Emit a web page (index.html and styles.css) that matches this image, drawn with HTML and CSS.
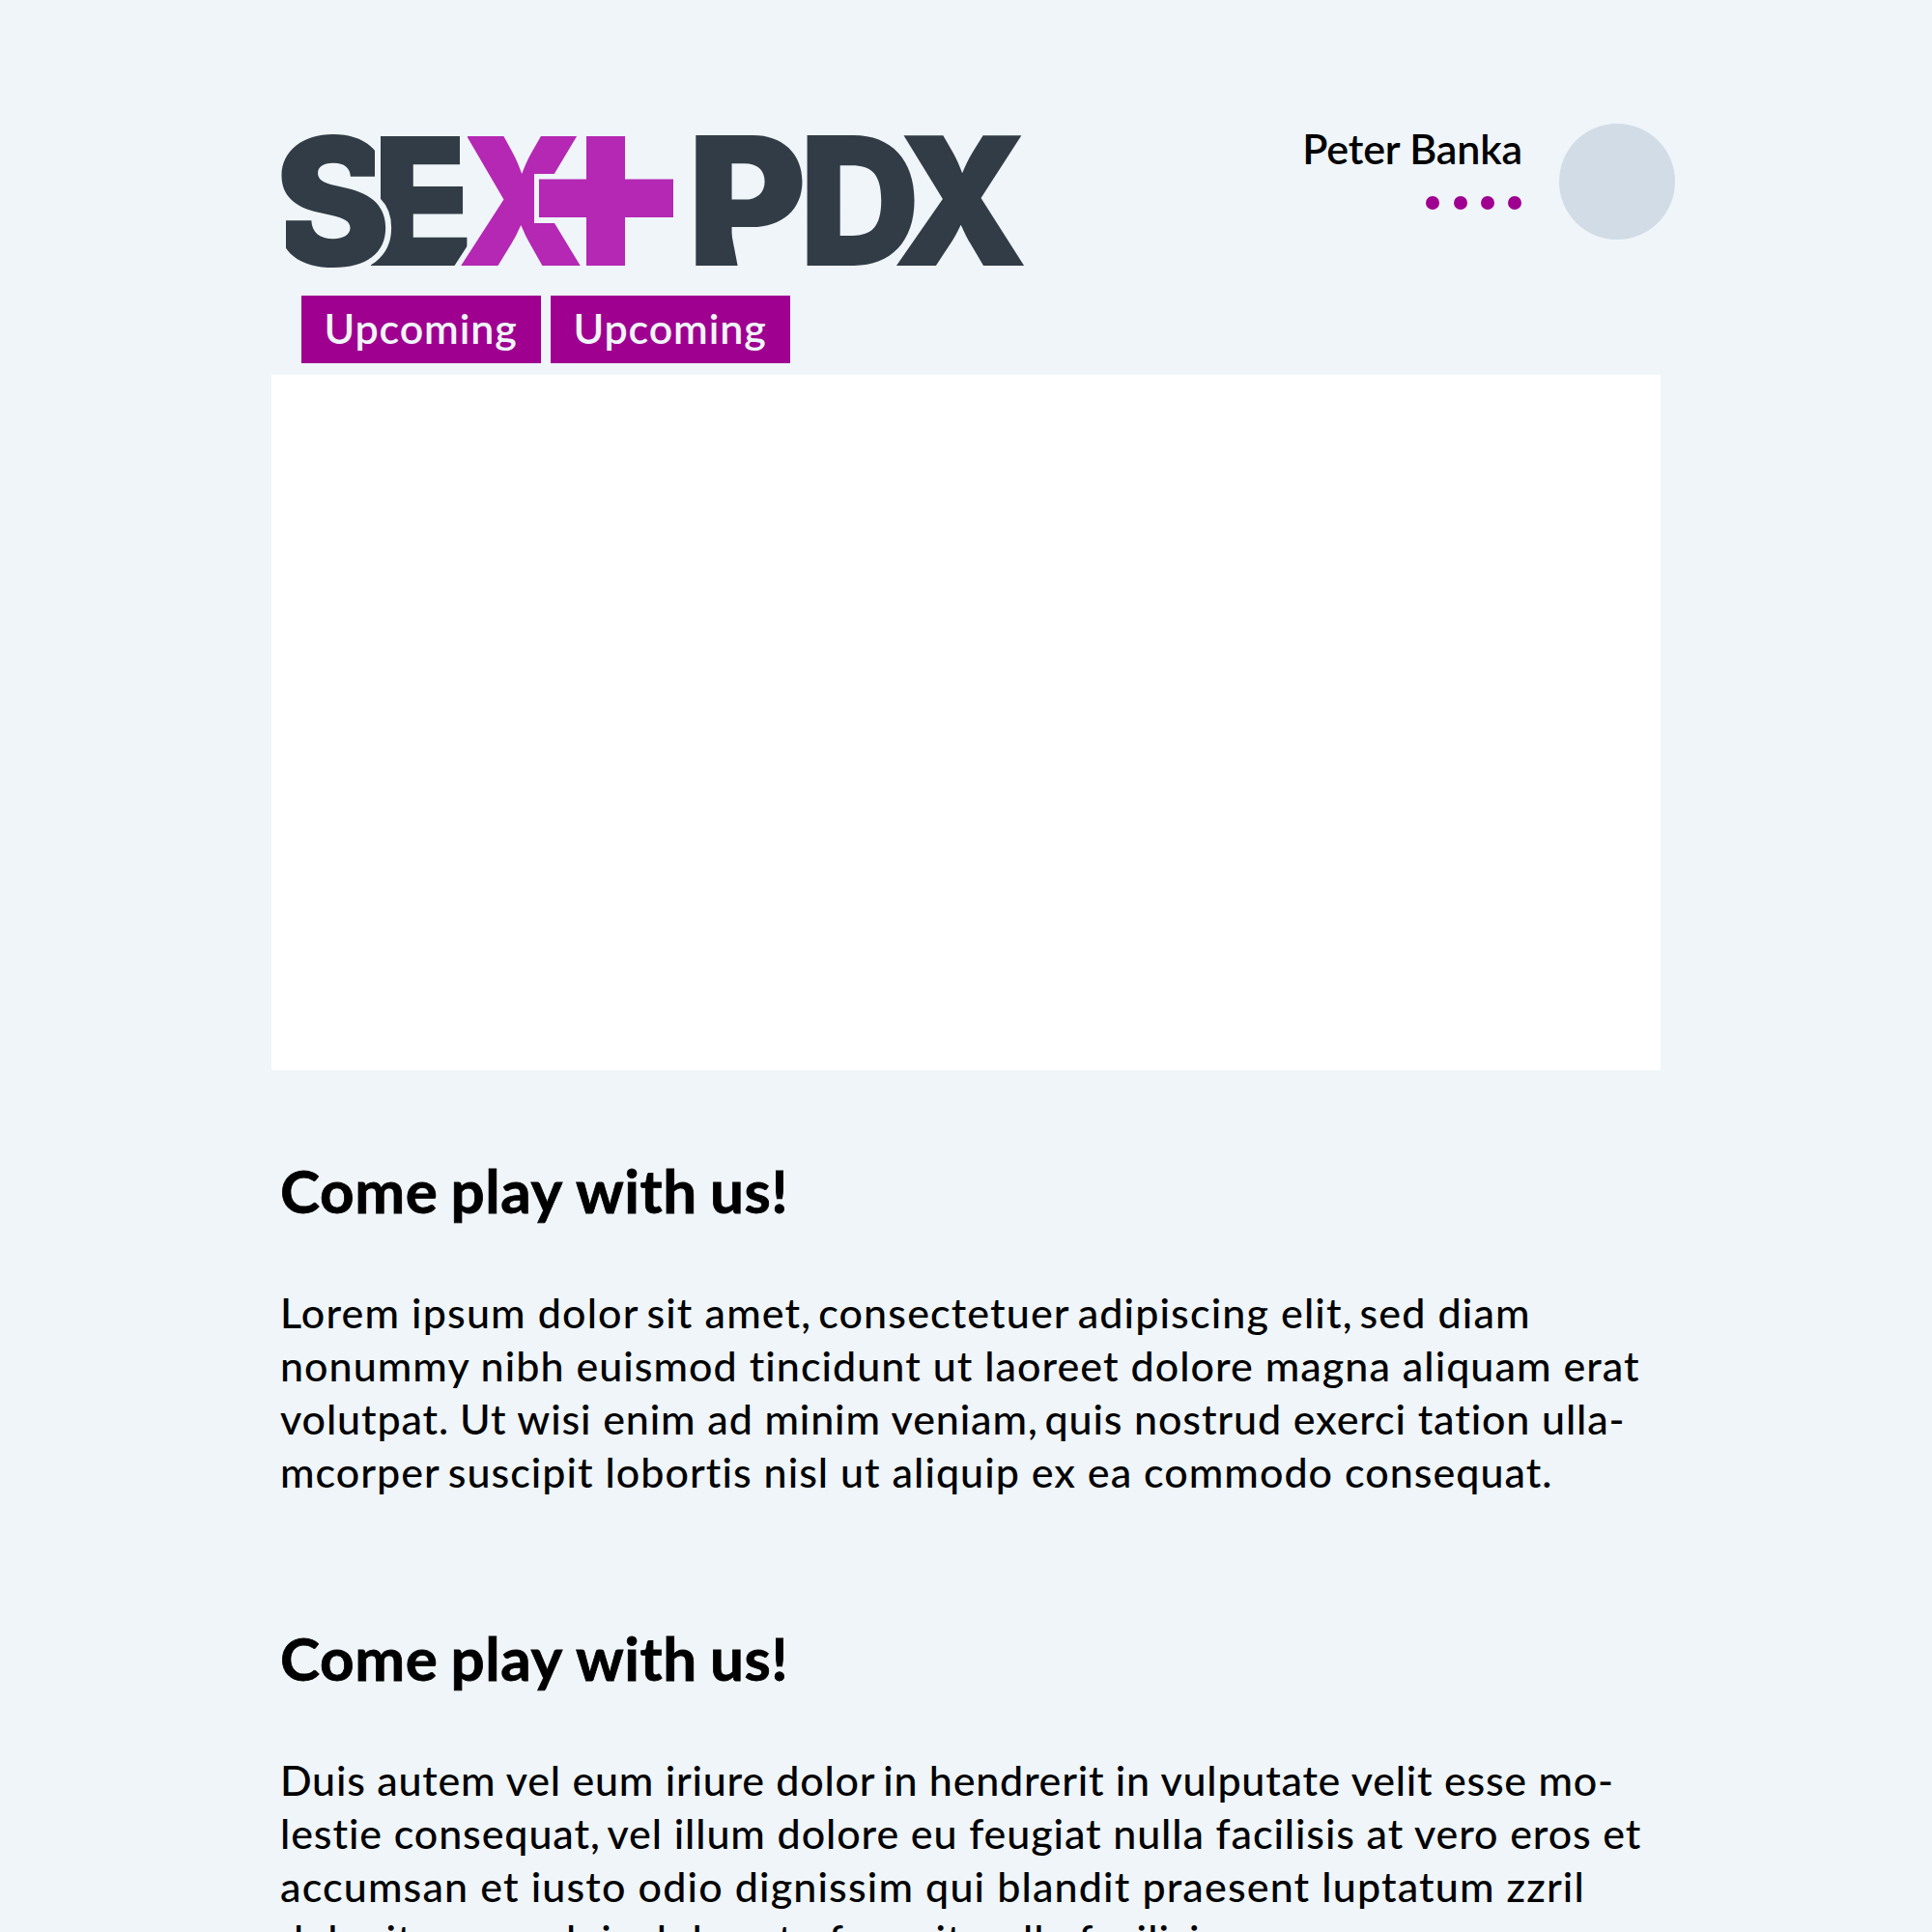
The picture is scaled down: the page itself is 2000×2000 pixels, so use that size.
FILE: index.html
```
<!DOCTYPE html>
<html lang="en">
<head>
<meta charset="utf-8">
<title>SEX+ PDX</title>
<link rel="stylesheet" href="styles.css">
</head>
<body>
<div class="page">
  <header class="header">
    <svg class="logo" viewBox="280 128 800 160" role="img" aria-label="SEX+ PDX">
      <defs>
        <clipPath id="s-trim"><path d="M285 130H388V200H412V285H296V225H285Z"/></clipPath>
      </defs>
      <g class="ink">
        <text transform="translate(386 275) scale(.93 1)">E</text>
        <rect x="384" y="245" width="14" height="30"/>
        <g clip-path="url(#s-trim)">
          <text class="cut" transform="translate(283 275) scale(.99 1)">S</text>
        </g>
      </g>
      <rect class="gap" x="476" y="138" width="8" height="36"/>
      <g class="accent">
        <text class="cut" transform="translate(473.5 275) skewX(-.5) scale(.905 1)">X</text>
        <rect class="gap" x="476" y="138" width="8" height="22"/>
        <rect class="gap" x="553" y="180" width="54" height="51"/>
        <rect x="607" y="141" width="40" height="134"/>
        <rect x="558" y="185.5" width="139" height="39.5"/>
      </g>
      <g class="ink">
        <text transform="translate(711.5 275) scale(1.025 1.007)">P</text>
        <rect x="750" y="241" width="9" height="34" transform="translate(756 241) skewX(11) translate(-758 -241)"/>
        <text transform="translate(827.5 275) scale(.94 1.007)">D</text>
        <text transform="translate(924 275) skewX(-1) scale(.968 1.007)">X</text>
      </g>
    </svg>
    <div class="user">
      <div class="who">
        <span class="name">Peter Banka</span>
        <span class="dots"><i></i><i></i><i></i><i></i></span>
      </div>
      <div class="avatar"></div>
    </div>
  </header>
  <nav class="tabs">
    <a class="tab">Upcoming</a>
    <a class="tab">Upcoming</a>
  </nav>
  <div class="hero"></div>
  <section class="post">
    <h2>Come<b class="n"> </b>play<b class="n"> </b>with<b class="n"> </b>us!</h2>
    <p>
      <span class="line a1">Lorem ipsum dolor<b class="r"> </b>sit amet,<b class="c"> </b>consectetuer<b class="r"> </b>adipiscing elit,<b class="c"> </b>sed diam</span>
      <span class="line a2">nonummy nibh euismod tincidunt ut laoreet dolore magna aliquam erat</span>
      <span class="line a3">volutpat.<b class="p"> </b>Ut wisi enim ad minim veniam,<b class="c"> </b>quis nostrud exerci tation ulla-</span>
      <span class="line a4">mcorper<b class="r"> </b>suscipit lobortis nisl ut aliquip ex ea commodo consequat.</span>
    </p>
  </section>
  <section class="post">
    <h2>Come<b class="n"> </b>play<b class="n"> </b>with<b class="n"> </b>us!</h2>
    <p>
      <span class="line b1">Duis autem vel eum iriure dolor<b class="r"> </b>in hendrerit in vulputate velit esse mo-</span>
      <span class="line b2">lestie consequat,<b class="c"> </b>vel illum dolore eu feugiat nulla facilisis at vero eros et</span>
      <span class="line b3">accumsan et iusto odio dignissim qui blandit praesent luptatum zzril</span>
      <span class="line b4">delenit augue duis dolore te feugait nulla facilisi.</span>
    </p>
  </section>
</div>
</body>
</html>
```
FILE: styles.css
```
* { box-sizing: border-box; }
html, body { margin: 0; }
body {
  height: 2000px;
  overflow: hidden;
  background: #eff5f9;
  color: #000;
  font-family: Lato, sans-serif;
}
.page { width: 1438px; margin: 0 281px; padding-top: 128px; }

.header { display: flex; justify-content: space-between; height: 178px; margin: 0 -15px 0 -1px; }
.logo { display: block; width: 800px; height: 160px; overflow: visible; font-family: Inter, sans-serif; font-weight: 900; font-size: 184px; }
.ink { fill: #323c46; }
.accent { fill: #b428b4; }
.gap { fill: #eff5f9; }
.cut { stroke: #eff5f9; stroke-width: 12px; paint-order: stroke; }

.user { display: flex; gap: 38px; }
.who { display: flex; flex-direction: column; align-items: flex-end; }
.name { font-size: 43px; font-weight: 600; line-height: 52px; letter-spacing: -.15px; white-space: nowrap; }
.dots { display: flex; gap: 14.2px; margin: 23px 1px 0 0; }
.dots i { width: 14px; height: 14px; border-radius: 50%; background: #9f0090; }
.avatar { width: 120px; height: 120px; border-radius: 50%; background: #d2dce6; }

.tabs { display: flex; gap: 10px; padding-left: 31px; height: 82px; }
.tab {
  width: 248px;
  height: 70px;
  padding-left: 23.5px;
  background: #9f0090;
  color: #eff5f9;
  font-size: 43px;
  font-weight: 600;
  line-height: 68px;
  letter-spacing: .85px;
}

.hero { height: 720px; background: #fff; }

.post { padding-left: 9px; margin-top: 87px; }
.post + .post { margin-top: 128px; }
.post h2 { margin: 0 0 62px; font-size: 62px; font-weight: 700; line-height: 74px; letter-spacing: .6px; white-space: nowrap; -webkit-text-stroke: .8px #000; }
.post p { margin: 0; font-size: 43px; font-weight: 500; line-height: 55px; }
.line { display: block; white-space: nowrap; }
.c, .r, .p, .n { font-weight: inherit; }
.n { letter-spacing: -2px; }
.c { letter-spacing: -4px; }
.p { letter-spacing: 0; }
.r { letter-spacing: -3px; }
.a1 { letter-spacing: 1.14px; }
.a2 { letter-spacing: 1.04px; }
.a3 { letter-spacing: .88px; }
.a4 { letter-spacing: 1.03px; }
.b1 { letter-spacing: .76px; }
.b2 { letter-spacing: .9px; }
.b3 { letter-spacing: 1.15px; }
.b4 { letter-spacing: 1.1px; }
```
